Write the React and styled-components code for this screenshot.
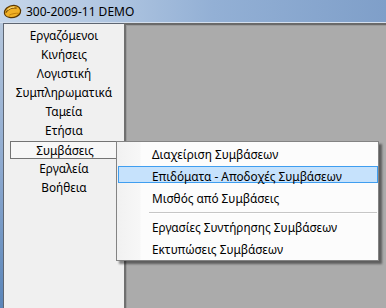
import React from 'react';
import styled, { createGlobalStyle } from 'styled-components';

// Global page reset
const GlobalStyle = createGlobalStyle`
  html, body {
    margin: 0;
    padding: 0;
    background: #ababab;
  }
  body {
    font-family: "Noto Sans", "DejaVu Sans", sans-serif;
    font-size: 12px;
    color: #000;
  }
`;

// Window frame
const Window = styled.div`
  position: relative;
  width: 386px;
  height: 308px;
  display: flex;
  flex-direction: column;
  overflow: hidden;
`;

const TitleBar = styled.div`
  height: 23px;
  display: flex;
  align-items: center;
  gap: 4px;
  padding-left: 3px;
  background: linear-gradient(to right, #c6d6ea 0%, #b3c8e2 25%, #93b0d5 55%, #7f9fc9 100%);
  border-bottom: 1px solid #d4dfed;
  box-sizing: border-box;
  flex-shrink: 0;
`;

const Title = styled.span`
  font-size: 12px;
  color: #000;
  padding-top: 1px;
`;

const Body = styled.div`
  flex: 1;
  display: flex;
`;

const FrameEdge = styled.div`
  width: 3px;
  background: linear-gradient(to bottom, #b4c6dc 0%, #8eaad0 50%, #5a85b9 100%);
`;

// Left navigation panel
const NavPanel = styled.div`
  width: 121px;
  box-sizing: border-box;
  background: #f0f0f0;
  border-top: 1px solid #5e6672;
  border-left: 1px solid #5e6672;
  padding-top: 2px;
  display: flex;
  flex-direction: column;
  font-size: 11.8px;
`;

const NavItem = styled.div`
  height: ${(p) => (p.$active ? '18px' : '19px')};
  line-height: ${(p) => (p.$active ? '16px' : '19px')};
  text-align: center;
  box-sizing: border-box;
  margin: ${(p) => (p.$active ? '1px 4px 0 6px' : '0')};
  border: ${(p) => (p.$active ? '1px solid #747474' : 'none')};
  background: ${(p) => (p.$active ? '#f7f7f7' : 'transparent')};
  white-space: nowrap;
`;

// MDI workspace
const Workspace = styled.div`
  flex: 1;
  background: #ababab;
  border-top: 2px solid #6a6a6a;
  border-left: 2px solid #707070;
  box-shadow: inset 1px 1px 0 #9a9a9a;
`;

// Dropdown menu
const Menu = styled.div`
  position: absolute;
  left: 116px;
  top: 141px;
  width: 263px;
  box-sizing: border-box;
  border: 1px solid #838383;
  padding: 1px 0 0 0;
  font-size: 11.8px;
  background: linear-gradient(to right, #f1f1f1 0, #f7f7f7 23px, #fcfcfc 24px, #fcfcfc 100%);
  box-shadow: 3px 3px 2px rgba(0, 0, 0, 0.45);
`;

const MenuItem = styled.div`
  position: relative;
  isolation: isolate;
  height: 22px;
  display: flex;
  align-items: center;
  padding-left: 35px;
  white-space: nowrap;

  &::before {
    content: '';
    display: ${(p) => (p.$active ? 'block' : 'none')};
    position: absolute;
    left: 1px;
    right: 0;
    top: 1px;
    height: 17px;
    box-sizing: border-box;
    background: #c6e2fc;
    border: 1px solid #3f9ef0;
    z-index: -1;
  }
`;

const Separator = styled.div`
  height: 1px;
  margin: 3px 1px 2px 32px;
  background: #c6c6c6;
  border-bottom: 1px solid #ffffff;
`;

const AppIcon = () => (
  <svg width="19" height="15" viewBox="0 0 19 15">
    <path
      d="M1.5 9.5 C0.8 5.2 5.8 1.2 11 1.3 C15.4 1.4 18.2 4.6 17.4 8.4 C16.6 12.2 11 14.2 6.4 13.4 C3.7 12.9 1.8 11.4 1.5 9.5 Z"
      fill="#f0b026"
      stroke="#5a3700"
      strokeWidth="1.2"
    />
    <path d="M2.8 8.6 C5 5.2 9.2 3.6 13.6 4.1" stroke="#754a00" strokeWidth="1.1" fill="none" />
    <path d="M4.6 5.8 C6.6 4 9.2 3.1 11.4 3.1" stroke="#fde38e" strokeWidth="1" fill="none" />
    <path d="M6.2 11.2 C9.4 9.6 12.6 9.1 15.8 9.3" stroke="#c4820a" strokeWidth="1" fill="none" />
  </svg>
);

const navItems = [
  'Εργαζόμενοι',
  'Κινήσεις',
  'Λογιστική',
  'Συμπληρωματικά',
  'Ταμεία',
  'Ετήσια',
  'Συμβάσεις',
  'Εργαλεία',
  'Βοήθεια',
];

const App = () => {
  return (
    <>
      <GlobalStyle />
      <Window>
        <TitleBar>
          <AppIcon />
          <Title>300-2009-11 DEMO</Title>
        </TitleBar>
        <Body>
          <FrameEdge />
          <NavPanel>
            {navItems.map((item) => (
              <NavItem key={item} $active={item === 'Συμβάσεις'}>
                {item}
              </NavItem>
            ))}
          </NavPanel>
          <Workspace />
        </Body>
        <Menu>
          <MenuItem>Διαχείριση Συμβάσεων</MenuItem>
          <MenuItem $active>Επιδόματα - Αποδοχές Συμβάσεων</MenuItem>
          <MenuItem>Μισθός από Συμβάσεις</MenuItem>
          <Separator />
          <MenuItem>Εργασίες Συντήρησης Συμβάσεων</MenuItem>
          <MenuItem>Εκτυπώσεις Συμβάσεων</MenuItem>
        </Menu>
      </Window>
    </>
  );
};

export default App;
